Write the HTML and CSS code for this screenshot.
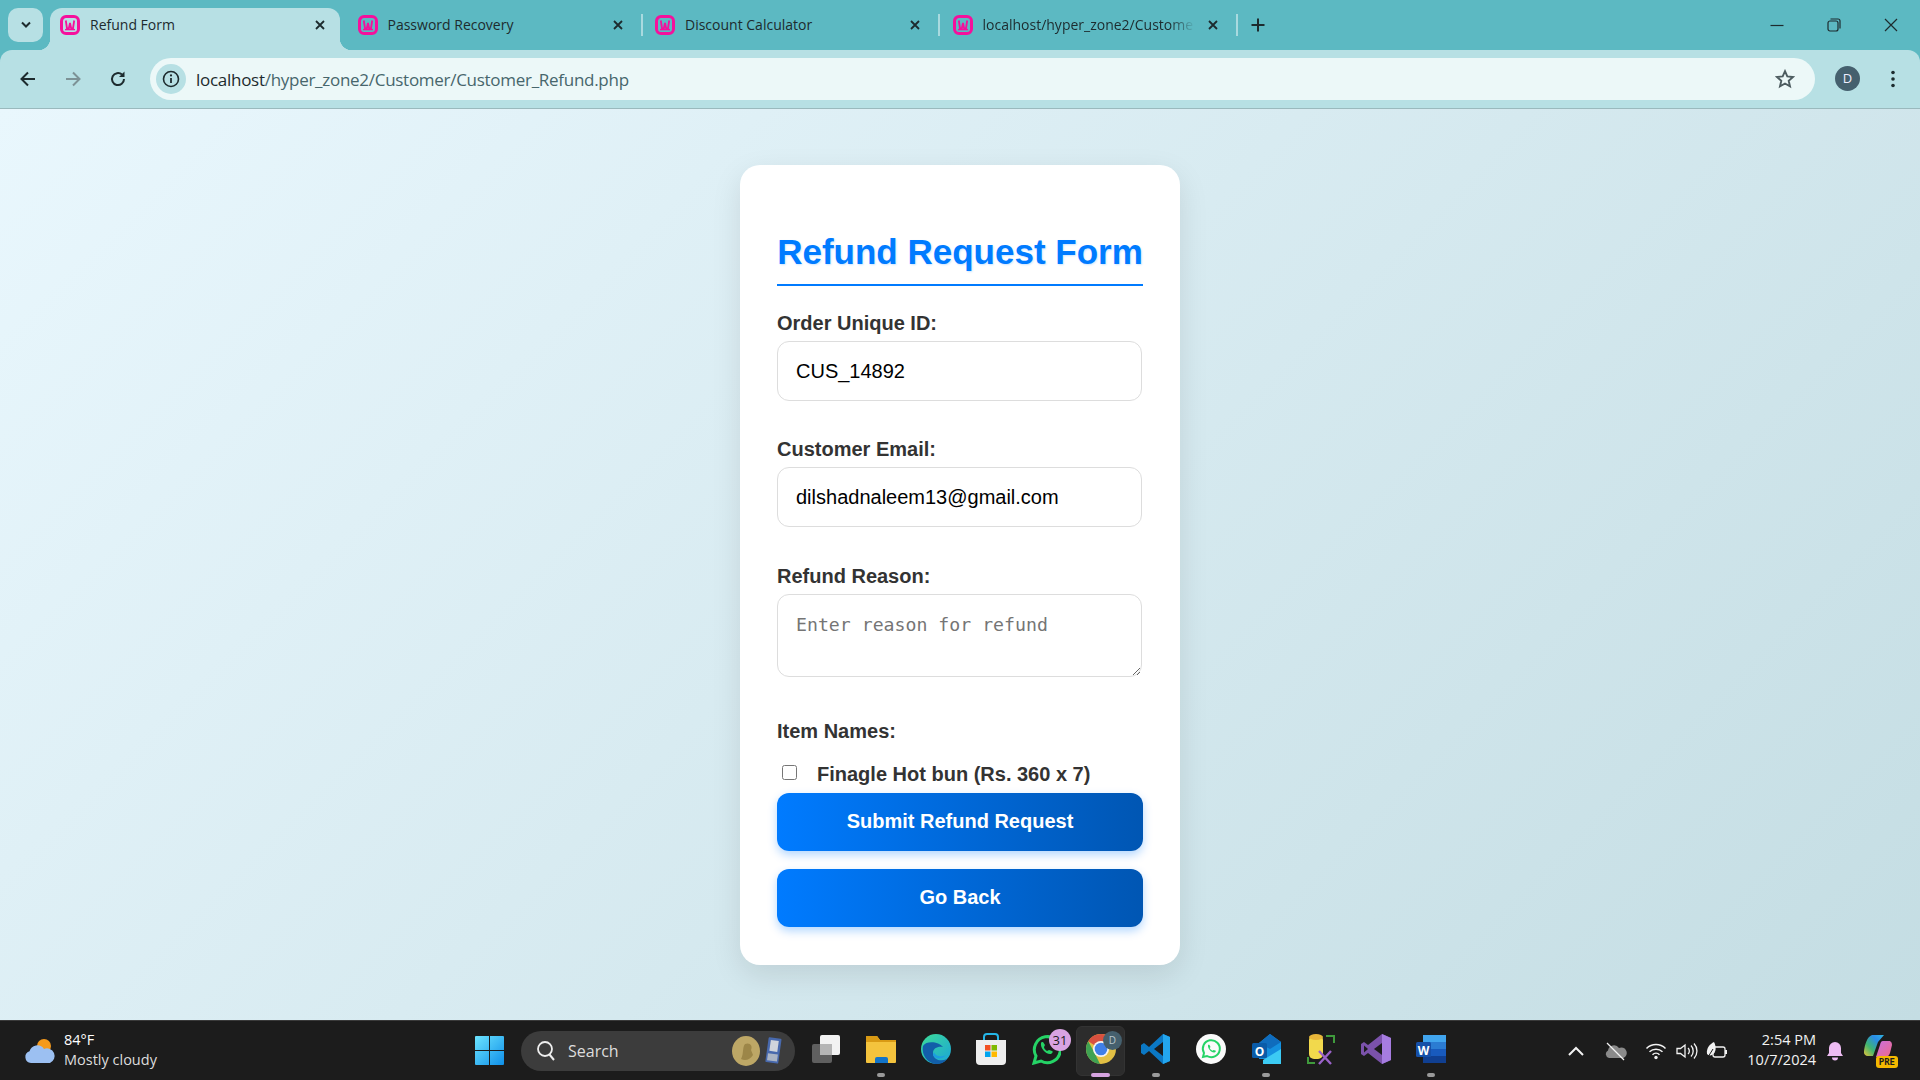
FILE: index.html
```html
<!DOCTYPE html>
<html lang="en">
<head>
<meta charset="utf-8">
<title>Refund Form</title>
<link rel="stylesheet" href="styles.css">
</head>
<body>
<svg class="defs" width="0" height="0" aria-hidden="true">
  <symbol id="wamp" viewBox="0 0 20 20">
    <path d="M6 1.5H14A4.5 4.5 0 0 1 18.5 6V14A4.5 4.5 0 0 1 14 18.5H6A4.5 4.5 0 0 1 1.5 14V6A4.5 4.5 0 0 1 6 1.5Z" fill="none" stroke="#f5109c" stroke-width="3"/>
    <path d="M5.8 5.5L7 13.5H8.8L10 8L11.2 13.5H13L14.2 5.5" fill="none" stroke="#f5109c" stroke-width="1.8"/>
    <path d="M5 14.6H15" stroke="#f5109c" stroke-width="1.4"/>
  </symbol>
  <symbol id="x" viewBox="0 0 12 12">
    <path d="M2 2L10 10M10 2L2 10" stroke="#1d2b2e" stroke-width="1.8" fill="none"/>
  </symbol>
</svg>

<header class="chrome">
  <div class="tabstrip">
    <button class="tabsearch"><svg width="12" height="8" viewBox="0 0 12 8"><path d="M2 1.5L6 5.5L10 1.5" fill="none" stroke="#1d2b2e" stroke-width="2"/></svg></button>
    <div class="tab active">
      <svg class="fav"><use href="#wamp"/></svg><span class="tabtitle">Refund Form</span><svg class="close"><use href="#x"/></svg>
    </div>
    <div class="tabsep hidden"></div>
    <div class="tab">
      <svg class="fav"><use href="#wamp"/></svg><span class="tabtitle">Password Recovery</span><svg class="close"><use href="#x"/></svg>
    </div>
    <div class="tabsep"></div>
    <div class="tab">
      <svg class="fav"><use href="#wamp"/></svg><span class="tabtitle">Discount Calculator</span><svg class="close"><use href="#x"/></svg>
    </div>
    <div class="tabsep"></div>
    <div class="tab">
      <svg class="fav"><use href="#wamp"/></svg><span class="tabtitle fade">localhost/hyper_zone2/Custome</span><svg class="close"><use href="#x"/></svg>
    </div>
    <div class="tabsep"></div>
    <svg class="newtab" width="14" height="14" viewBox="0 0 14 14"><path d="M7 0.5V13.5M0.5 7H13.5" stroke="#1d2b2e" stroke-width="2"/></svg>
    <div class="winctl">
      <svg width="14" height="14" viewBox="0 0 14 14"><path d="M0.5 7.5H13.5" stroke="#1d2b2e" stroke-width="1.2"/></svg>
      <svg width="14" height="14" viewBox="0 0 14 14"><rect x="1" y="3" width="10" height="10" rx="2" fill="none" stroke="#1d2b2e" stroke-width="1.2"/><path d="M3.5 1H11A2 2 0 0 1 13 3V10.5" fill="none" stroke="#1d2b2e" stroke-width="1.2"/></svg>
      <svg width="14" height="14" viewBox="0 0 14 14"><path d="M1 1L13 13M13 1L1 13" stroke="#1d2b2e" stroke-width="1.2"/></svg>
    </div>
  </div>
  <div class="toolbar">
    <svg class="navbtn" width="18" height="18" viewBox="0 0 18 18"><path d="M16 9H3M9 2.5L2.5 9L9 15.5" fill="none" stroke="#1d2b2e" stroke-width="2"/></svg>
    <svg class="navbtn" width="18" height="18" viewBox="0 0 18 18"><path d="M2 9H15M9 2.5L15.5 9L9 15.5" fill="none" stroke="#7d9296" stroke-width="2"/></svg>
    <svg class="navbtn" width="18" height="18" viewBox="0 0 18 18"><path d="M15 9A6 6 0 1 1 13 4.6" fill="none" stroke="#1d2b2e" stroke-width="2"/><path d="M15.5 1.5V7H10Z" fill="#1d2b2e"/></svg>
    <div class="omnibox">
      <span class="sitechip"><svg width="18" height="18" viewBox="0 0 18 18"><circle cx="9" cy="9" r="7.5" fill="none" stroke="#1d2b2e" stroke-width="1.6"/><path d="M9 8V13" stroke="#1d2b2e" stroke-width="1.8"/><circle cx="9" cy="5.4" r="1.1" fill="#1d2b2e"/></svg></span>
      <span class="url"><span class="host">localhost</span>/hyper_zone2/Customer/Customer_Refund.php</span>
      <svg class="star" width="20" height="20" viewBox="0 0 20 20"><path d="M10 2.2L12.3 7.4L18 8L13.7 11.8L15 17.4L10 14.5L5 17.4L6.3 11.8L2 8L7.7 7.4Z" fill="none" stroke="#4d5c60" stroke-width="1.9"/></svg>
    </div>
    <span class="avatar">D</span>
    <svg class="menu" width="6" height="18" viewBox="0 0 6 18"><circle cx="3" cy="2.5" r="1.8" fill="#1d2b2e"/><circle cx="3" cy="9" r="1.8" fill="#1d2b2e"/><circle cx="3" cy="15.5" r="1.8" fill="#1d2b2e"/></svg>
  </div>
</header>

<main class="page">
  <form class="card">
    <h2 class="title">Refund Request Form</h2>
    <label class="lbl" for="oid">Order Unique ID:</label>
    <input class="field first" id="oid" type="text" value="CUS_14892">
    <label class="lbl" for="mail">Customer Email:</label>
    <input class="field" id="mail" type="text" value="dilshadnaleem13@gmail.com">
    <label class="lbl" for="why">Refund Reason:</label>
    <textarea class="area" id="why" placeholder="Enter reason for refund"></textarea>
    <div class="lbl items">Item Names:</div>
    <label class="itemrow"><input class="check" type="checkbox"><span class="itemname">Finagle Hot bun (Rs. 360 x 7)</span></label>
    <button class="btn" type="button">Submit Refund Request</button>
    <button class="btn" type="button">Go Back</button>
  </form>
</main>

<footer class="taskbar">
  <div class="weather">
    <svg width="34" height="30" viewBox="0 0 34 30">
      <circle cx="21" cy="10" r="7" fill="#f59a1c"/>
      <path d="M8 27A6 6 0 0 1 6.5 15.3A8 8 0 0 1 21 13A6.5 6.5 0 0 1 27 27Z" fill="#9cc0f2"/>
    </svg>
    <div class="wtext"><span class="wtemp">84°F</span><span class="wdesc">Mostly cloudy</span></div>
  </div>
  <svg class="winlogo" width="29" height="29" viewBox="0 0 29 29">
    <defs><linearGradient id="wg" x1="0" y1="0" x2="1" y2="1"><stop offset="0" stop-color="#6ce4ff"/><stop offset="1" stop-color="#0f8fe8"/></linearGradient></defs>
    <path d="M0 1A1 1 0 0 1 1 0H14V14H0ZM15 0H28A1 1 0 0 1 29 1V14H15ZM0 15H14V29H1A1 1 0 0 1 0 28ZM15 15H29V28A1 1 0 0 1 28 29H15Z" fill="url(#wg)"/>
  </svg>
  <div class="search">
    <svg width="20" height="22" viewBox="0 0 20 22"><circle cx="9" cy="9" r="7" fill="none" stroke="#eee" stroke-width="1.8"/><path d="M13.5 14.5L18 20" stroke="#eee" stroke-width="2"/></svg>
    <span class="searchtext">Search</span>
    <svg class="medal" width="54" height="32" viewBox="0 0 54 32">
      <ellipse cx="15" cy="16" rx="14" ry="15" fill="#bda766"/>
      <path d="M10 24C13 19 11 13 14 9C19 7 22 11 20 15L22 20C19 25 14 26 10 24Z" fill="#9c8648"/>
      <rect x="36" y="3" width="13" height="25" rx="1" fill="#4869ad" transform="rotate(8 43 15)"/>
      <rect x="38.500" y="5.500" width="8" height="11" fill="#cfd4dc" transform="rotate(8 43 15)"/>
      <rect x="37.500" y="19" width="10" height="7" fill="#aab4c4" transform="rotate(8 43 15)"/>
    </svg>
  </div>
  <div class="apps">
    <div class="app">
      <svg width="30" height="30" viewBox="0 0 30 30"><rect x="1" y="10" width="20" height="19" rx="2" fill="#5f5f5f"/><rect x="9" y="1" width="20" height="20" rx="2" fill="#f2f2f2"/><rect x="9" y="10" width="12" height="11" fill="#b5b5b5"/></svg>
    </div>
    <div class="app open">
      <svg width="30" height="30" viewBox="0 0 30 30"><path d="M0 3A1 1 0 0 1 1 2H11L14 6H30V28A1 1 0 0 1 29 29H1A1 1 0 0 1 0 28Z" fill="#f4c33d"/><path d="M0 3A1 1 0 0 1 1 2H11L14 6H30V8H0Z" fill="#d99a14"/><path d="M9 25A2 2 0 0 1 11 23H20A2 2 0 0 1 22 25V29H9Z" fill="#1274c9"/></svg>
    </div>
    <div class="app">
      <svg width="30" height="30" viewBox="0 0 30 30"><defs><linearGradient id="eg" x1="0" y1="0" x2="1" y2="1"><stop offset="0" stop-color="#3ddc97"/><stop offset="1" stop-color="#1aa4d8"/></linearGradient></defs><circle cx="15" cy="15" r="15" fill="url(#eg)"/><path d="M2 12C0 22 8 30 16 30C20 30 24 28 26 25C20 28 12 26 12 19C12 14 17 12 22 13C18 8 6 6 2 12Z" fill="#125ea9"/><path d="M13 18C14 22 20 24 25 21C22 25 14 26 12 21Z" fill="#1b9de2"/></svg>
    </div>
    <div class="app">
      <svg width="30" height="32" viewBox="0 0 30 32"><path d="M8 8V4A3 3 0 0 1 11 1H19A3 3 0 0 1 22 4V8" fill="none" stroke="#25b6e8" stroke-width="2"/><path d="M0 7H30V28A4 4 0 0 1 26 32H4A4 4 0 0 1 0 28Z" fill="#eeeeee"/><rect x="9" y="12" width="5.5" height="5.5" fill="#f25022"/><rect x="15.5" y="12" width="5.5" height="5.5" fill="#7fba00"/><rect x="9" y="18.5" width="5.5" height="5.5" fill="#00a4ef"/><rect x="15.5" y="18.5" width="5.5" height="5.5" fill="#ffb900"/></svg>
    </div>
    <div class="app">
      <svg width="30" height="32" viewBox="0 0 30 32"><path d="M3 30L5 23A13 13 0 1 1 10 28Z" fill="none" stroke="#25d366" stroke-width="3"/><path d="M10 10C9 15 15 22 20 21C22 20 22 18 21 18L18 17L16 18C14 17 13 15 13 14L14 12L12 9C11 9 10 9 10 10Z" fill="#25d366"/></svg>
      <span class="badge">31</span>
    </div>
    <div class="app current">
      <svg width="32" height="32" viewBox="0 0 32 32"><circle cx="16" cy="16" r="15" fill="#e2c044"/><path d="M16 1A15 15 0 0 1 29 8.5H16A7.5 7.5 0 0 0 9.5 12.2L3.2 8.2A15 15 0 0 1 16 1Z" fill="#d8503f"/><path d="M3.2 8.2L9.5 19.8L15 31A15 15 0 0 1 3.2 8.2Z" fill="#3fa253"/><circle cx="16" cy="16" r="8" fill="#f4f4f4"/><circle cx="16" cy="16" r="6.3" fill="#3f7fe8"/></svg>
      <span class="profile">D</span>
      <span class="active-bar"></span>
    </div>
    <div class="app open">
      <svg width="30" height="32" viewBox="0 0 30 32"><path d="M22 1L29 4V28L22 31L8 18L3 22L0 20V12L3 10L8 14Z" fill="#0b78c4"/><path d="M22 1L29 4V28L22 31Z" fill="#23a6ee"/><path d="M22 9L13 16L22 23Z" fill="#1c1c1c"/></svg>
    </div>
    <div class="app">
      <svg width="30" height="30" viewBox="0 0 30 30"><circle cx="15" cy="15" r="15" fill="#fafafa"/><path d="M7 23L8 19A8.5 8.5 0 1 1 11 22Z" fill="none" stroke="#25d366" stroke-width="2"/><path d="M12 11C11.500 14 15 19 18.500 18.500C20 18 20 17 19.500 16.500L17.500 16L16.500 16.700C15 16 14 15 13.700 14L14.500 13L13.500 11C13 10.700 12.300 10.700 12 11Z" fill="#25d366"/></svg>
    </div>
    <div class="app open">
      <svg width="30" height="32" viewBox="0 0 30 32"><path d="M8 10L19 1L30 9V26H8Z" fill="#1490df"/><path d="M19 1L30 9L19 16L8 10Z" fill="#0f6cbd"/><path d="M12 31H30V16L12 27Z" fill="#3ccbf4"/><rect x="1" y="10" width="15" height="15" rx="1.500" fill="#0a5ba8"/><text class="tile" x="8.500" y="22.500">O</text></svg>
    </div>
    <div class="app">
      <svg width="30" height="32" viewBox="0 0 30 32"><rect x="3" y="2" width="14" height="24" rx="5" fill="#f2d94c"/><ellipse cx="10" cy="4" rx="7" ry="3" fill="#e8b63a"/><path d="M20 3H28V10M2 24V30H9" fill="none" stroke="#3f9a3c" stroke-width="2"/><path d="M13 18L25 31M25 18L13 31" stroke="#9a63c9" stroke-width="2.400"/></svg>
    </div>
    <div class="app">
      <svg width="30" height="32" viewBox="0 0 30 32"><path d="M21 1L30 5V27L21 31L7 20L3 23L0 21V11L3 9L7 12Z" fill="#7b52ab"/><path d="M21 1L30 5V27L21 31Z" fill="#a67ce0"/><path d="M21 10L13 16L21 22Z" fill="#1c1c1c"/><path d="M3 12.500L7 16L3 19.500Z" fill="#1c1c1c"/></svg>
    </div>
    <div class="app open">
      <svg width="30" height="30" viewBox="0 0 30 30"><rect x="7" y="1" width="23" height="28" rx="2" fill="#2b7cd3"/><rect x="7" y="1" width="23" height="7" fill="#41a5ee"/><rect x="7" y="15" width="23" height="7" fill="#185abd"/><rect x="7" y="22" width="23" height="7" fill="#103f91"/><rect x="0" y="8" width="15" height="15" rx="1.500" fill="#1650a8"/><text class="tile" x="7.500" y="20.500">W</text></svg>
    </div>
  </div>
  <div class="tray">
    <svg class="t-chev" width="20" height="12" viewBox="0 0 20 12"><path d="M3 10L10 3L17 10" fill="none" stroke="#f2f2f2" stroke-width="2"/></svg>
    <svg class="t-cloud" width="24" height="20" viewBox="0 0 24 20"><path d="M5 17A4 4 0 0 1 4 9.500A6 6 0 0 1 15 7A4.500 4.500 0 0 1 19.500 17Z" fill="#8a8a8a"/><path d="M3 2L20 19" stroke="#f2f2f2" stroke-width="1.300"/></svg>
    <svg class="t-wifi" width="22" height="18" viewBox="0 0 22 18"><path d="M1.500 6.500A13.500 13.500 0 0 1 20.500 6.500M4.500 9.700A9.500 9.500 0 0 1 17.500 9.700M7.500 12.700A5 5 0 0 1 14.500 12.700" fill="none" stroke="#f2f2f2" stroke-width="1.500"/><circle cx="11" cy="15.500" r="1.700" fill="#f2f2f2"/></svg>
    <svg class="t-vol" width="22" height="18" viewBox="0 0 22 18"><path d="M1 6.500H4.500L9 3V15L4.500 11.500H1Z" fill="none" stroke="#f2f2f2" stroke-width="1.300"/><path d="M12 6A4 4 0 0 1 12 12M15 3.500A8 8 0 0 1 15 14.500M18 1.500A11 11 0 0 1 18 16.500" fill="none" stroke="#f2f2f2" stroke-width="1.300"/></svg>
    <svg class="t-bat" width="22" height="20" viewBox="0 0 22 20"><rect x="7" y="6" width="12" height="10" rx="2" fill="none" stroke="#f2f2f2" stroke-width="1.300"/><rect x="19" y="9" width="2" height="4" fill="#f2f2f2"/><path d="M1 13C0 7 4 3 8 1C10 5 11 11 6 14C4 15 2 14 1 13Z" fill="#f2f2f2"/><path d="M2 16L7 8" stroke="#1c1c1c" stroke-width="1"/></svg>
    <div class="clock"><span>2:54 PM</span><span>10/7/2024</span></div>
    <svg class="t-bell" width="18" height="20" viewBox="0 0 18 20"><path d="M1 15L3 12V7A6 6 0 0 1 15 7V12L17 15Z" fill="#eebcf3"/><path d="M6 16.500H12A3 3 0 0 1 6 16.500Z" fill="#eebcf3"/></svg>
    <div class="copilot">
      <svg width="30" height="26" viewBox="0 0 30 26"><defs><linearGradient id="cg" x1="0" y1="1" x2="1" y2="0"><stop offset="0" stop-color="#e8c43a"/><stop offset=".35" stop-color="#3fb56f"/><stop offset=".7" stop-color="#2a8be8"/><stop offset="1" stop-color="#2fb6e0"/></linearGradient><linearGradient id="cp" x1="0" y1="0" x2="1" y2="1"><stop offset="0" stop-color="#c86fe0"/><stop offset="1" stop-color="#f06a8a"/></linearGradient></defs><path d="M8 1H20L14 8L9 22H4A4 4 0 0 1 0 17C1 10 3 3 8 1Z" fill="url(#cg)"/><path d="M19 7H26A4 4 0 0 1 28 11L26 19C25 22 23 23 20 23H12L16 11C16.500 9 17 7 19 7Z" fill="url(#cp)"/></svg>
      <span class="pre">PRE</span>
    </div>
  </div>
</footer>
</body>
</html>
```

FILE: styles.css
```css
* { box-sizing: border-box; }
html, body { margin: 0; height: 100%; }
body {
  width: 1920px;
  height: 1080px;
  overflow: hidden;
  display: flex;
  flex-direction: column;
  font-family: "Liberation Sans", Arial, sans-serif;
}
.defs { position: absolute; }

/* browser frame */
.chrome { background: #5cb9c2; flex: none; }
.tabstrip {
  height: 50px;
  display: flex;
  align-items: flex-end;
  padding-left: 8px;
  font-family: "Open Sans", sans-serif;
}
.tabsearch {
  width: 35px;
  height: 34px;
  margin: 0 7px 8px 0;
  padding: 0;
  border: 0;
  border-radius: 10px;
  background: #b7e0e4;
  display: flex;
  align-items: center;
  justify-content: center;
}
.tab {
  position: relative;
  width: 290px;
  height: 42px;
  padding: 0 14px 9px 10px;
  display: flex;
  align-items: center;
  border-radius: 12px 12px 0 0;
  font-size: 14px;
  color: #1d2b2e;
}
.tab.active { background: #b7e0e4; }
.tab.active::before,
.tab.active::after {
  content: "";
  position: absolute;
  bottom: 0;
  width: 12px;
  height: 12px;
}
.tab.active::before {
  left: -12px;
  background: radial-gradient(circle at 0 0, transparent 12px, #b7e0e4 12.5px);
}
.tab.active::after {
  right: -12px;
  background: radial-gradient(circle at 100% 0, transparent 12px, #b7e0e4 12.5px);
}
.fav { width: 20px; height: 20px; flex: none; }
.tabtitle {
  flex: 1;
  min-width: 0;
  margin-left: 10px;
  white-space: nowrap;
  overflow: hidden;
}
.tabtitle.fade {
  -webkit-mask-image: linear-gradient(90deg, #000 88%, transparent 100%);
  mask-image: linear-gradient(90deg, #000 88%, transparent 100%);
}
.close { width: 12px; height: 12px; flex: none; margin-left: 12px; }
.tabsep {
  width: 2px;
  height: 22px;
  margin: 0 2.5px 14px 3px;
  background: #a9dadf;
}
.tabsep.hidden { visibility: hidden; }
.newtab { margin: 0 0 18px 11px; }
.winctl {
  margin-left: auto;
  align-self: stretch;
  padding: 18px 22px 0 0;
  display: flex;
  gap: 43px;
}

.toolbar {
  height: 59px;
  padding: 8px 0 9px 19px;
  display: flex;
  align-items: center;
  background: #b7e0e4;
  border-bottom: 1px solid #9ab9bd;
  border-radius: 12px 12px 0 0;
}
.navbtn { margin-right: 27px; flex: none; }
.navbtn:nth-child(3) { margin-right: 23px; }
.omnibox {
  width: 1665px;
  height: 42px;
  padding: 0 20px 0 6px;
  display: flex;
  align-items: center;
  background: #ecf8f8;
  border-radius: 21px;
}
.sitechip {
  width: 30px;
  height: 30px;
  flex: none;
  border-radius: 50%;
  background: #b7e0e4;
  display: flex;
  align-items: center;
  justify-content: center;
}
.url {
  margin: 1px 0 0 10px;
  font-family: "Open Sans", sans-serif;
  font-size: 17px;
  letter-spacing: -0.28px;
  color: #47666c;
}
.host { color: #1d2b2e; }
.star { margin-left: auto; }
.avatar {
  width: 25px;
  height: 25px;
  margin-left: 20px;
  flex: none;
  border-radius: 50%;
  background: #45606e;
  color: #eef;
  font: 13px/25px "Open Sans", sans-serif;
  text-align: center;
}
.menu { margin-left: 30px; flex: none; }

/* page */
.page {
  flex: 1;
  min-height: 0;
  display: flex;
  align-items: center;
  justify-content: center;
  background: linear-gradient(135deg, #e9f7fd 0%, #c4dde3 100%);
}
.card {
  width: 440px;
  height: 800px;
  padding: 29px 37px 0;
  display: flex;
  flex-direction: column;
  background: #fff;
  border-radius: 20px;
  box-shadow: 0 10px 30px rgba(0, 0, 0, 0.1);
}
.title {
  margin: 0 0 25px;
  padding: 37px 0 12px;
  border-bottom: 2px solid #007bff;
  color: #007bff;
  font-size: 35px;
  line-height: 41px;
  font-weight: 700;
  text-align: center;
  white-space: nowrap;
  text-shadow: 1px 1px 2px rgba(0, 123, 255, 0.2);
}
.lbl {
  display: block;
  height: 23px;
  margin-bottom: 7px;
  padding-top: 1px;
  color: #333;
  font-size: 20px;
  line-height: 23px;
  font-weight: 700;
}
.field {
  display: block;
  width: 365px;
  height: 60px;
  margin-bottom: 37px;
  padding: 2px 18px 0;
  border: 1px solid #ddd;
  border-radius: 12px;
  background: #fff;
  color: #000;
  font: 20px "Liberation Sans", Arial, sans-serif;
}
.field.first { margin-bottom: 36px; }
.area {
  display: block;
  width: 365px;
  height: 83px;
  margin-bottom: 42px;
  padding: 19px 18px 17px;
  border: 1px solid #ddd;
  border-radius: 12px;
  font: 18.2px/22px "DejaVu Sans Mono", monospace;
}
.area::placeholder { color: #757575; }
.items { margin-bottom: 19px; }
.itemrow {
  display: flex;
  align-items: center;
  gap: 20px;
  height: 24px;
  margin-bottom: 8px;
  padding-left: 5px;
  color: #333;
  font-size: 20px;
  font-weight: 700;
}
.itemname { padding-top: 4px; }
.check { width: 15px; height: 15px; margin: 0; flex: none; }
.btn {
  height: 58px;
  margin-bottom: 18px;
  padding: 0;
  border: 0;
  border-radius: 12px;
  background: linear-gradient(90deg, #007bff, #0056b3);
  color: #fff;
  font: 700 20px "Liberation Sans", Arial, sans-serif;
  box-shadow: 0 4px 10px rgba(0, 123, 255, 0.3);
}

/* taskbar */
.taskbar {
  flex: none;
  height: 60px;
  display: flex;
  align-items: center;
  background: #1c1c1c;
  border-top: 1px solid #3a3a3a;
  color: #f2f2f2;
  font-family: "Open Sans", sans-serif;
}
.weather {
  width: 475px;
  flex: none;
  padding-left: 23px;
  display: flex;
  align-items: center;
  gap: 7px;
}
.wtext { display: flex; flex-direction: column; margin-top: -2px; font-size: 14.500px; line-height: 20px; }
.wtemp { color: #fff; }
.wdesc { color: #ddd; }
.winlogo { flex: none; }
.search {
  width: 274px;
  height: 40px;
  margin-left: 17px;
  padding: 0 10px 0 15px;
  flex: none;
  display: flex;
  align-items: center;
  background: #3c3c3c;
  border-radius: 20px;
}
.searchtext { margin-left: 12px; font-size: 16px; color: #ddd; }
.medal { margin-left: auto; }
.apps { margin-left: 3px; display: flex; flex: none; }
.app {
  position: relative;
  width: 55px;
  height: 59px;
  display: flex;
  align-items: center;
  justify-content: center;
  padding-bottom: 4px;
}
.app.open::after {
  content: "";
  position: absolute;
  left: 23.5px;
  bottom: 3px;
  width: 8px;
  height: 4px;
  border-radius: 2px;
  background: #9a9a9a;
}
.app.current::before {
  content: "";
  position: absolute;
  left: 3px;
  right: 3px;
  top: 5px;
  bottom: 4px;
  border-radius: 6px;
  background: #2c2c2c;
  border: 1px solid #333;
}
.app.current svg { position: relative; }
.active-bar {
  position: absolute;
  left: 18px;
  bottom: 3px;
  width: 19px;
  height: 4px;
  border-radius: 2px;
  background: #d6a3e0;
}
.badge {
  position: absolute;
  top: 8px;
  right: 2px;
  width: 22px;
  height: 22px;
  border-radius: 50%;
  background: #d9a3e2;
  color: #1c1c1c;
  font-size: 13px;
  line-height: 22px;
  text-align: center;
}
.profile {
  position: absolute;
  top: 10px;
  right: 6px;
  width: 19px;
  height: 19px;
  border-radius: 50%;
  background: #45606e;
  color: #b9c6cc;
  font-size: 10px;
  line-height: 19px;
  text-align: center;
}
.tile {
  fill: #fff;
  font: 700 12px "Open Sans", sans-serif;
  text-anchor: middle;
}
.tray {
  margin-left: auto;
  padding-right: 24px;
  display: flex;
  align-items: center;
  flex: none;
}
.t-vol { margin-left: 9px; }
.t-wifi { margin-left: 17px; }
.t-cloud { margin-left: 18px; }
.t-bat { margin-left: 8px; }
.clock {
  width: 80px;
  margin: -2px 0 0 8px;
  display: flex;
  flex-direction: column;
  align-items: flex-end;
  font-size: 14.500px;
  line-height: 20px;
  white-space: nowrap;
}
.t-bell { margin-left: 10px; }
.copilot {
  position: relative;
  width: 32px;
  height: 34px;
  margin-left: 20px;
}
.pre {
  position: absolute;
  right: -2px;
  bottom: 0;
  padding: 0 3px;
  border-radius: 3px;
  background: #f5b800;
  color: #1c1c1c;
  font: 700 9px/12px "DejaVu Sans Mono", monospace;
}
```
